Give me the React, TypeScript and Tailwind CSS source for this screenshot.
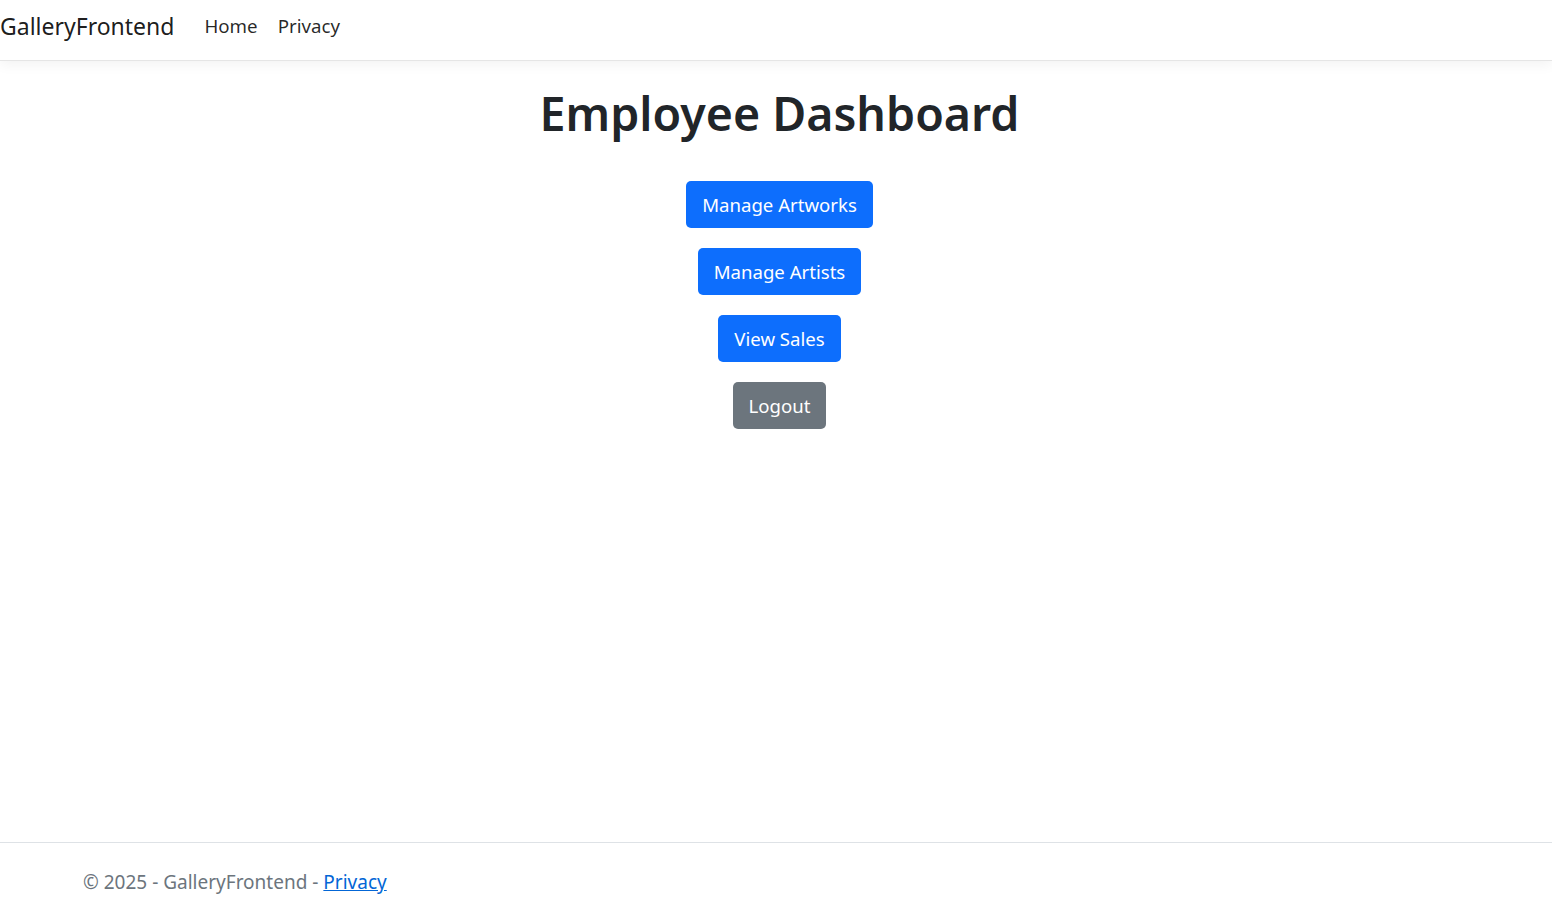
export default function App() {
  const buttons = [
    { label: 'Manage Artworks', tone: 'primary' },
    { label: 'Manage Artists', tone: 'primary' },
    { label: 'View Sales', tone: 'primary' },
    { label: 'Logout', tone: 'secondary' },
  ];

  return (
    <div className="flex min-h-screen flex-col bg-white font-['Noto_Sans',sans-serif] text-[#212529]">
      <header className="flex h-[61px] items-center border-b border-[#e5e5e5] bg-white pb-[8px] shadow-[0_4px_12px_rgba(0,0,0,0.05)]">
        <span className="mr-[30px] text-[23px] leading-none text-[rgba(0,0,0,0.9)]">GalleryFrontend</span>
        <nav className="flex items-center gap-[20px] text-[18.7px] text-[rgba(0,0,0,0.85)]">
          <a href="#">Home</a>
          <a href="#">Privacy</a>
        </nav>
      </header>

      <main className="flex flex-1 flex-col items-center pl-[7px]">
        <h1 className="mt-[22px] text-[46.5px] font-semibold leading-[60px]">Employee Dashboard</h1>
        <div className="mt-[38px] flex flex-col items-center gap-[20px]">
          {buttons.map((b) => (
            <button
              key={b.label}
              type="button"
              className={`h-[47px] rounded-[5px] px-[16px] text-[18.6px] text-white ${
                b.tone === 'primary' ? 'bg-[#0d6efd]' : 'bg-[#6c757d]'
              }`}
            >
              {b.label}
            </button>
          ))}
        </div>
      </main>

      <footer className="flex h-[65px] items-center border-t border-[#dee2e6] pl-[83px] pt-[14px] text-[19px] text-[#6c757d]">
        <span>
          © 2025 - GalleryFrontend -{' '}
          <a href="#" className="text-[#0366d6] underline">
            Privacy
          </a>
        </span>
      </footer>
    </div>
  );
}
